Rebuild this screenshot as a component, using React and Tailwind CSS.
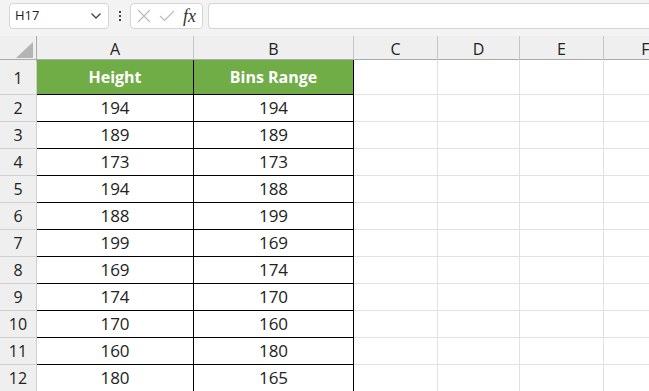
import React from "react";

const rows = [
  ["194", "194"],
  ["189", "189"],
  ["173", "173"],
  ["194", "188"],
  ["188", "199"],
  ["199", "169"],
  ["169", "174"],
  ["174", "170"],
  ["170", "160"],
  ["160", "180"],
  ["180", "165"],
];

const font = { fontFamily: '"Open Sans", "Noto Sans", sans-serif' };

function Chevron() {
  return (
    <svg width="12" height="8" viewBox="0 0 12 8" fill="none">
      <path d="M1.5 1.5 L6 6 L10.5 1.5" stroke="#444" strokeWidth="1.3" />
    </svg>
  );
}

export default function App() {
  const cols = "grid-cols-[37px_157px_160px_84px_82px_84px_84px] w-max";
  return (
    <div className="w-[649px] h-[391px] overflow-hidden bg-white text-[#222]" style={font}>
      {/* formula bar */}
      <div className="h-[36px] bg-[#f3f3f3] flex items-start pt-[3px]">
        <div className="ml-[9px] w-[100px] h-[26px] bg-white border border-[#d6d6d6] rounded-[4px] flex items-center justify-between pl-[5px] pr-[6px]">
          <span className="text-[13px] text-[#222]">H17</span>
          <Chevron />
        </div>
        <div className="w-[21px] h-[26px] flex flex-col items-center justify-center gap-[2px]">
          <span className="w-[2px] h-[2px] bg-[#444]" />
          <span className="w-[2px] h-[2px] bg-[#444]" />
          <span className="w-[2px] h-[2px] bg-[#444]" />
        </div>
        <div className="w-[73px] h-[26px] bg-white border border-[#d6d6d6] rounded-[4px] flex items-center pl-[6px] gap-[8px]">
          <svg width="14" height="14" viewBox="0 0 14 14">
            <path d="M1 1 L13 13 M13 1 L1 13" stroke="#b9b9b9" strokeWidth="1.1" />
          </svg>
          <svg width="16" height="12" viewBox="0 0 16 12">
            <path d="M1 6 L5.5 10.5 L15 1" stroke="#b9b9b9" strokeWidth="1.1" fill="none" />
          </svg>
          <span className="italic text-[18px] leading-none text-[#333]" style={{ fontFamily: '"Liberation Serif", serif' }}>
            fx
          </span>
        </div>
        <div className="ml-[5px] flex-1 h-[26px] bg-white border border-[#d6d6d6] rounded-l-[4px] border-r-0" />
      </div>

      {/* column headers */}
      <div className={`grid ${cols} h-[24px] bg-[#efefef] border-b border-[#ababab]`}>
        <div className="relative border-r border-[#ababab]">
          <svg className="absolute left-[16px] top-[6px]" width="17" height="16" viewBox="0 0 17 16">
            <path d="M17 0 L17 16 L0 16 Z" fill="#b4b4b4" />
          </svg>
        </div>
        {["A", "B", "C", "D", "E", "F"].map((c) => (
          <div
            key={c}
            className="flex items-center justify-center text-[16px] text-[#222] border-r border-[#c6c6c6] pt-[1px]"
          >
            {c}
          </div>
        ))}
      </div>

      {/* row 1 */}
      <div className={`grid ${cols} h-[35px]`}>
        <div className="bg-[#efefef] border-r border-[#ababab] border-b border-[#d0d0d0] flex items-center justify-center text-[16px] pt-[2px]">
          1
        </div>
        <div className="bg-[#70ad47] border-r border-b border-black flex items-center justify-center text-white font-bold text-[16px]">
          Height
        </div>
        <div className="bg-[#70ad47] border-r border-b border-black flex items-center justify-center text-white font-bold text-[16px]">
          Bins Range
        </div>
        <div className="border-r border-b border-[#e1e1e1]" />
        <div className="border-r border-b border-[#e1e1e1]" />
        <div className="border-r border-b border-[#e1e1e1]" />
        <div className="border-r border-b border-[#e1e1e1]" />
      </div>

      {rows.map((r, idx) => (
        <div key={idx} className={`grid ${cols} h-[27px]`}>
          <div className="bg-[#efefef] border-r border-[#ababab] border-b border-[#d0d0d0] flex items-center justify-center text-[16px]">
            {idx + 2}
          </div>
          <div className="border-r border-b border-black flex items-center justify-center text-[17px]">
            {r[0]}
          </div>
          <div className="border-r border-b border-black flex items-center justify-center text-[17px]">
            {r[1]}
          </div>
          <div className="border-r border-b border-[#e1e1e1]" />
          <div className="border-r border-b border-[#e1e1e1]" />
          <div className="border-r border-b border-[#e1e1e1]" />
          <div className="border-r border-b border-[#e1e1e1]" />
        </div>
      ))}
    </div>
  );
}
